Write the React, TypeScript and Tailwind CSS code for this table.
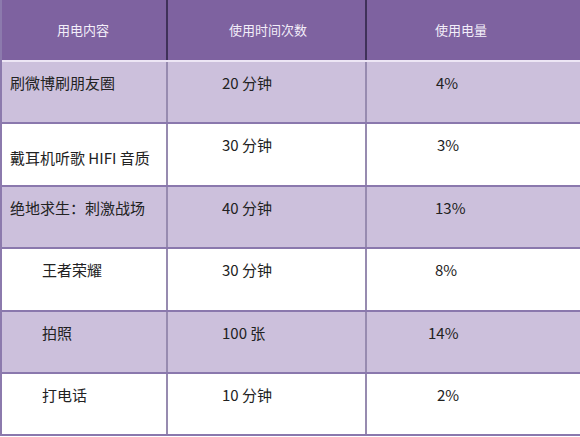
const rows = [
  { name: '刷微博刷朋友圈', namePad: 'pl-[8px] pt-[10px]', time: '20 分钟', power: '4%', powerPad: 'pl-[69px]', shade: true },
  { name: '戴耳机听歌 HIFI 音质', namePad: 'pl-[8px] pt-[23px]', time: '30 分钟', power: '3%', powerPad: 'pl-[70px]', shade: false },
  { name: '绝地求生：刺激战场', namePad: 'pl-[8px] pt-[10px]', time: '40 分钟', power: '13%', powerPad: 'pl-[68px]', shade: true },
  { name: '王者荣耀', namePad: 'pl-[40px] pt-[10px]', time: '30 分钟', power: '8%', powerPad: 'pl-[68px]', shade: false },
  { name: '拍照', namePad: 'pl-[40px] pt-[10px]', time: '100 张', power: '14%', powerPad: 'pl-[61px]', shade: true },
  { name: '打电话', namePad: 'pl-[40px] pt-[10px]', time: '10 分钟', power: '2%', powerPad: 'pl-[70px]', shade: false },
];

export default function App() {
  return (
    <div
      className="w-[580px] h-[437px] overflow-hidden bg-white text-[#222]"
      style={{ fontFamily: '"Noto Sans CJK SC", "Noto Sans", sans-serif' }}
    >
      <div className="border-l-2 border-[#8c7aad]">
        {/* header */}
        <div className="grid grid-cols-[166px_199px_1fr] h-[62px] bg-[#7e62a0] border-b-2 border-[#ede6f5] text-[13px] text-[#f3eef9]">
          <div className="flex items-center pl-[55px] border-r-2 border-[#3f3159]">用电内容</div>
          <div className="flex items-center pl-[61px] border-r-2 border-[#3f3159]">使用时间次数</div>
          <div className="flex items-center pl-[68px]">使用电量</div>
        </div>

        {rows.map((row, i) => (
          <div
            key={i}
            className={`grid grid-cols-[166px_199px_1fr] h-[62.4px] border-b-2 border-[#8a78ad] text-[15px] leading-[22px] ${
              row.shade ? 'bg-[#ccc0dc]' : 'bg-white'
            }`}
          >
            <div className={`${row.namePad} border-r-2 border-[#978bb0]`}>{row.name}</div>
            <div className="pl-[54px] pt-[10px] border-r-2 border-[#978bb0]">{row.time}</div>
            <div className={`${row.powerPad} pt-[10px]`}>{row.power}</div>
          </div>
        ))}
      </div>
    </div>
  );
}
